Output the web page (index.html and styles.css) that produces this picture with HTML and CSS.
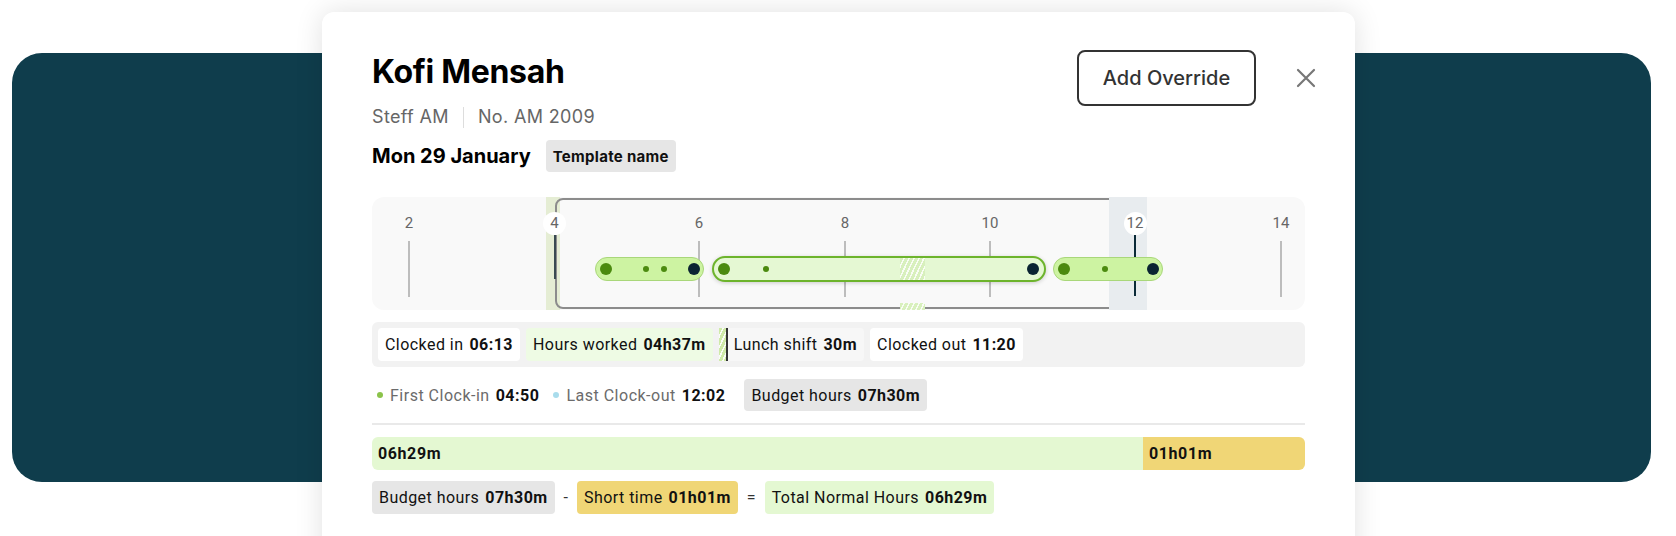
FILE: index.html
```html
<!DOCTYPE html>
<html lang="en">
<head>
<meta charset="utf-8">
<title>Kofi Mensah</title>
<link rel="stylesheet" href="styles.css">
</head>
<body>
<div class="stage"></div>
<div class="modal">
  <div class="head">
    <div class="who">
      <h1 class="name">Kofi Mensah</h1>
      <div class="meta"><span>Steff AM</span><span class="sep"></span><span>No. AM 2009</span></div>
      <div class="dateRow"><span class="date">Mon 29 January</span><span class="tag">Template name</span></div>
    </div>
    <div class="actions">
      <button class="btn">Add Override</button>
      <button class="close" aria-label="Close"><svg width="20" height="20" viewBox="0 0 20 20"><path d="M2 2 L18 18 M18 2 L2 18" stroke="#777" stroke-width="2.2" stroke-linecap="round" fill="none"/></svg></button>
    </div>
  </div>

  <div class="timeline">
    <div class="strip in"></div>
    <div class="window"></div>
    <div class="strip out"></div>
    <div class="tick" style="left:37px"><span class="line"></span><span class="lbl">2</span></div>
    <div class="tick now first" style="left:182.5px"><span class="line"></span><span class="lbl">4</span></div>
    <div class="tick" style="left:327px"><span class="line"></span><span class="lbl">6</span></div>
    <div class="tick" style="left:473px"><span class="line"></span><span class="lbl">8</span></div>
    <div class="tick" style="left:618px"><span class="line"></span><span class="lbl">10</span></div>
    <div class="tick now" style="left:763px"><span class="line"></span><span class="lbl">12</span></div>
    <div class="tick" style="left:909px"><span class="line"></span><span class="lbl">14</span></div>

    <div class="pill" style="left:223px;width:109px">
      <span class="dot" style="left:9.5px"></span>
      <span class="dot s" style="left:49.5px"></span>
      <span class="dot s" style="left:67.5px"></span>
      <span class="dot end" style="left:97.5px"></span>
    </div>
    <div class="pill main" style="left:340px;width:334px">
      <span class="hatch" style="left:186px;width:25px"></span>
      <span class="dot" style="left:10px"></span>
      <span class="dot s" style="left:52px"></span>
      <span class="dot end" style="left:319px"></span>
    </div>
    <div class="pill" style="left:681px;width:110px">
      <span class="dot" style="left:9.5px"></span>
      <span class="dot s" style="left:50.5px"></span>
      <span class="dot end" style="left:98.5px"></span>
    </div>
    <div class="hatch low" style="left:528px;width:25px"></div>
  </div>

  <div class="summary">
    <div class="chip white">Clocked in <b>06:13</b></div>
    <div class="chip worked">Hours worked <b>04h37m</b></div>
    <div class="chip lunch"><span class="lunchmark"></span>Lunch shift <b>30m</b></div>
    <div class="chip white">Clocked out <b>11:20</b></div>
  </div>

  <div class="legend">
    <span class="ldot green"></span><span class="lab">First Clock-in</span><b>04:50</b>
    <span class="ldot blue"></span><span class="lab">Last Clock-out</span><b>12:02</b>
    <div class="chip grey budget">Budget hours <b>07h30m</b></div>
  </div>

  <div class="divider"></div>

  <div class="bar">
    <div class="seg ok" style="width:771px">06h29m</div>
    <div class="seg short">01h01m</div>
  </div>

  <div class="calc">
    <div class="chip grey">Budget hours <b>07h30m</b></div>
    <span class="op">-</span>
    <div class="chip yellow">Short time <b>01h01m</b></div>
    <span class="op">=</span>
    <div class="chip green">Total Normal Hours <b>06h29m</b></div>
  </div>
</div>
</body>
</html>
```

FILE: styles.css
```css
* { box-sizing: border-box; margin: 0; padding: 0; }
html, body { width: 1676px; height: 536px; overflow: hidden; background: #fff; }
body { font-family: Roboto, "Noto Sans", Arial, sans-serif; color: #111; position: relative; }

.stage { margin: 53px 25px 0 12px; height: 429px; background: #0f3d4c; border-radius: 30px; }

.modal {
  position: absolute; left: 322px; top: 12px; width: 1033px; height: 580px;
  background: #fff; border-radius: 12px; box-shadow: 0 0 28px rgba(0,0,0,.12);
  padding: 38px 50px 0;
}

.head { display: flex; justify-content: space-between; align-items: flex-start; font-family: Inter, Roboto, sans-serif; }
.who { padding-top: 3px; }
.name { font-size: 32px; line-height: 37px; font-weight: 700; color: #000; letter-spacing: -.3px; }
.meta { margin-top: 15px; display: flex; align-items: center; font-size: 18px; line-height: 24px; color: #666; letter-spacing: .35px; }
.sep { width: 1px; height: 21px; background: #ddd; margin: 0 14px; }
.dateRow { margin-top: 11px; display: flex; align-items: center; gap: 15px; }
.date { font-size: 20px; line-height: 32px; font-weight: 700; color: #000; }
.tag { height: 32px; display: flex; align-items: center; padding: 0 7px; border-radius: 4px; background: #e6e6e6; font-size: 15px; font-weight: 700; letter-spacing: .3px; color: #111; }

.actions { display: flex; align-items: center; margin-right: -11px; }
.btn { width: 179px; height: 56px; border: 2px solid #333; border-radius: 8px; background: #fff; font: 500 20px/1 Inter, Roboto, sans-serif; color: #333; }
.close { width: 20px; height: 20px; margin-left: 40px; border: 0; background: none; display: flex; }

/* timeline chart */
.timeline { position: relative; margin-top: 25px; height: 113px; background: #f9f9f9; border-radius: 12px; }
.strip { position: absolute; top: 0; bottom: 0; }
.strip.in { left: 174px; width: 14px; background: #e5edd4; }
.strip.out { left: 737px; width: 38px; background: #e8ecef; }
.window { position: absolute; left: 183px; width: 580px; top: 1px; bottom: 1px; border: 2px solid #8c8c8c; border-radius: 8px; }
.tick { position: absolute; top: 0; bottom: 0; width: 0; }
.tick .lbl { position: absolute; z-index: 1; top: 16px; left: -15px; width: 30px; text-align: center; font-size: 15px; line-height: 20px; color: #666; }
.tick .line { position: absolute; top: 44px; left: -0.75px; width: 1.5px; height: 56px; background: #bdbdbd; }
.tick.now .line { top: 37px; height: 62px; width: 2px; left: -1px; background: #0b2a38; }
.tick.now.first .line { height: 45px; background: #3a4a52; }
.tick.now .lbl::before { content: ""; position: absolute; z-index: -1; left: 50%; top: 50%; width: 23px; height: 23px; margin: -11.5px 0 0 -11.5px; border-radius: 50%; background: #fff; }

.pill { position: absolute; top: 60px; height: 24px; border-radius: 12px; background: #cdf3a2; border: 1.5px solid #a9d77a; }
.pill.main { top: 59px; height: 26px; border-radius: 13px; background: #e5f8d3; border: 2px solid #6db42c; box-shadow: 0 1px 4px rgba(0,0,0,.18); }
.dot { position: absolute; top: 50%; width: 12px; height: 12px; margin: -6px 0 0 -6px; border-radius: 50%; background: #4b8a0f; }
.dot.s { width: 6px; height: 6px; margin: -3px 0 0 -3px; }
.dot.end { background: #0b2432; }
.hatch { position: absolute; top: 0; bottom: 0; background: repeating-linear-gradient(115deg, transparent 0 3px, rgba(255,255,255,.85) 3px 4.5px), #d8f0bd; }
.hatch.low { top: auto; bottom: 0; height: 7px; }

/* chips */
.chip { height: 33px; display: inline-flex; align-items: center; gap: 6px; padding: 0 7px; border-radius: 4px; font-size: 16px; letter-spacing: .45px; color: #111; white-space: nowrap; }
.chip b, .legend b { font-weight: 700; }
.white { background: #fff; }
.worked { background: #eefbe4; }
.grey { background: #e6e6e6; }
.yellow { background: #f0d676; }
.green { background: #e4f8d2; }

.summary { margin-top: 12px; height: 45px; padding: 6px; display: flex; gap: 6px; background: #f2f2f2; border-radius: 6px; }
.chip.lunch { padding-left: 0; background: #f7f7f7; }
.lunchmark { width: 9px; height: 33px; border-right: 2px solid #333; background: repeating-linear-gradient(115deg, transparent 0 3px, rgba(255,255,255,.9) 3px 4.5px), #cfeaa8; }

.legend { margin-top: 12px; height: 32px; display: flex; align-items: center; font-size: 16px; letter-spacing: .5px; padding-left: 5px; }
.ldot { width: 6px; height: 6px; border-radius: 50%; margin-right: 7px; }
.ldot.green { background: #8bc34a; }
.ldot.blue { background: #a9dcec; margin-left: 14px; }
.lab { color: #6b6b6b; margin-right: 6px; }
.budget { height: 32px; margin-left: 19px; }

.divider { margin-top: 12px; height: 2px; background: #e9e9e9; }

.bar { margin-top: 12px; height: 33px; display: flex; border-radius: 6px; overflow: hidden; }
.seg { display: flex; align-items: center; padding-left: 6px; font-size: 16px; font-weight: 700; letter-spacing: .6px; }
.seg.ok { background: #e4f8d2; }
.seg.short { flex: 1; background: #f0d676; }

.calc { margin-top: 11px; display: flex; align-items: center; gap: 9px; }
.op { font-size: 16px; color: #333; }
```
